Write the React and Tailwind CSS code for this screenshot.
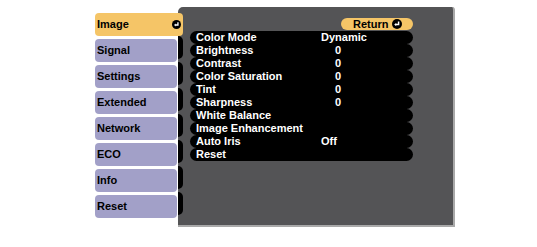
const tabs = ["Image", "Signal", "Settings", "Extended", "Network", "ECO", "Info", "Reset"]

const rows = [
    ["Color Mode", "Dynamic", "l"],
    ["Brightness", "0", "n"],
    ["Contrast", "0", "n"],
    ["Color Saturation", "0", "n"],
    ["Tint", "0", "n"],
    ["Sharpness", "0", "n"],
    ["White Balance", "", "l"],
    ["Image Enhancement", "", "l"],
    ["Auto Iris", "Off", "l"],
    ["Reset", "", "l"],
]

function EnterIcon({size = 10}) {
    return (
        <svg width={size} height={size} viewBox="0 0 10 10" className="shrink-0">
            <circle cx="5" cy="5" r="5" fill="#000"/>
            <path d="M6.6 2.4 V5.6 H3.6" stroke="#fff" strokeWidth="1.5" fill="none"/>
            <path d="M2.2 5.6 L4.2 4 V7.2 Z" fill="#fff"/>
        </svg>
    )
}

export default function App() {
    return (
        <div className="w-[537px] h-[247px] bg-white flex pl-[95px] pt-[7px] font-['Liberation_Sans',Arial,sans-serif] font-bold text-[11px] leading-none">
            <div className="flex flex-col pt-[6px] gap-[3px] w-[83px] shrink-0">
                {tabs.map((t, i) => i === 0 ? (
                    <div key={t} className="relative z-10 w-[88px] h-[23px] bg-[#f5c567] rounded-[4px] flex items-center justify-between pl-[2px] pr-[2px] text-black">
                        <span>{t}</span>
                        <EnterIcon size={9}/>
                    </div>
                ) : (
                    <div key={t} className="w-[82px] h-[23px] bg-[#a2a0c8] rounded-[4px] flex items-center pl-[2px] text-black">
                        {t}
                    </div>
                ))}
            </div>

            <div className="w-[277px] h-[220px] bg-[#545456] rounded-tl-[5px] rounded-tr-[3px] border-r-2 border-b-2 border-[#a9a9a9] flex shrink-0">
                <div className="flex flex-col pt-[29px] gap-[3px] w-[6px] shrink-0">
                    {tabs.slice(1).map(t => (
                        <div key={t} className="w-[5px] h-[23px] bg-black rounded-r-[5px]"/>
                    ))}
                </div>
                <div className="ml-[6px] pt-[11px] w-[223px] flex flex-col">
                    <div className="flex justify-end h-[12px] mb-[1px]">
                        <div className="w-[72px] h-[12px] bg-[#f5c567] rounded-full flex items-center pl-[12px] gap-[4px] text-black">
                            <span>Return</span>
                            <EnterIcon/>
                        </div>
                    </div>
                    <div className="flex flex-col">
                        {rows.map(([label, value, align]) => (
                            <div key={label} className="h-[13px] bg-black rounded-full flex items-center pl-[6px] text-white">
                                <span className="w-[125px] shrink-0">{label}</span>
                                {value && <span className={align === "n" ? "pl-[14px]" : ""}>{value}</span>}
                            </div>
                        ))}
                    </div>
                </div>
            </div>
        </div>
    )
}
